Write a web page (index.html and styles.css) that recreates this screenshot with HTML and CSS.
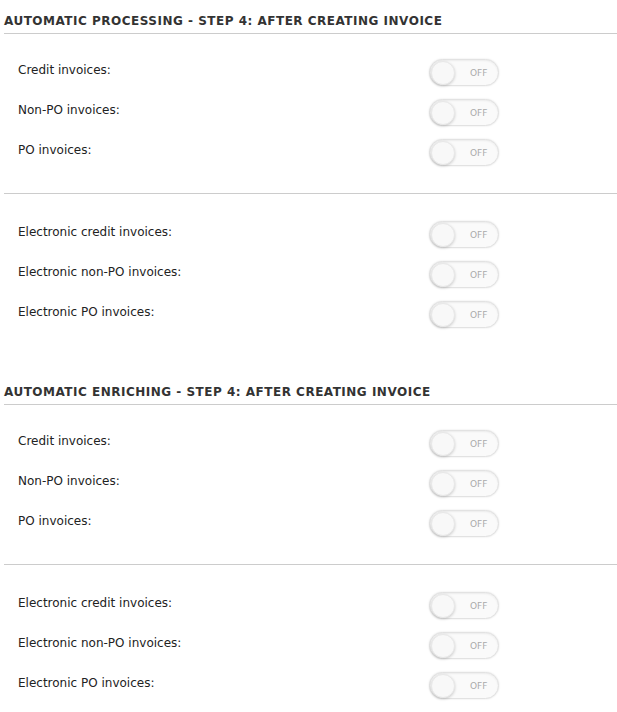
FILE: index.html
```html
<!DOCTYPE html>
<html>
<head>
    <title>Invoice settings</title>
    <link rel="stylesheet" href="styles.css">
</head>
<body>
    <div class="section">
        <h2 class="titre">Automatic processing - Step 4: After creating invoice</h2>
        <div class="groupe">
            <div class="ligne"><span>Credit invoices:</span><div class="toggle"><span class="knob"></span><span class="etat">OFF</span></div></div>
            <div class="ligne"><span>Non-PO invoices:</span><div class="toggle"><span class="knob"></span><span class="etat">OFF</span></div></div>
            <div class="ligne"><span>PO invoices:</span><div class="toggle"><span class="knob"></span><span class="etat">OFF</span></div></div>
        </div>
        <div class="groupe">
            <div class="ligne"><span>Electronic credit invoices:</span><div class="toggle"><span class="knob"></span><span class="etat">OFF</span></div></div>
            <div class="ligne"><span>Electronic non-PO invoices:</span><div class="toggle"><span class="knob"></span><span class="etat">OFF</span></div></div>
            <div class="ligne"><span>Electronic PO invoices:</span><div class="toggle"><span class="knob"></span><span class="etat">OFF</span></div></div>
        </div>
    </div>
    <div class="section">
        <h2 class="titre">Automatic enriching - Step 4: After creating invoice</h2>
        <div class="groupe">
            <div class="ligne"><span>Credit invoices:</span><div class="toggle"><span class="knob"></span><span class="etat">OFF</span></div></div>
            <div class="ligne"><span>Non-PO invoices:</span><div class="toggle"><span class="knob"></span><span class="etat">OFF</span></div></div>
            <div class="ligne"><span>PO invoices:</span><div class="toggle"><span class="knob"></span><span class="etat">OFF</span></div></div>
        </div>
        <div class="groupe">
            <div class="ligne"><span>Electronic credit invoices:</span><div class="toggle"><span class="knob"></span><span class="etat">OFF</span></div></div>
            <div class="ligne"><span>Electronic non-PO invoices:</span><div class="toggle"><span class="knob"></span><span class="etat">OFF</span></div></div>
            <div class="ligne"><span>Electronic PO invoices:</span><div class="toggle"><span class="knob"></span><span class="etat">OFF</span></div></div>
        </div>
    </div>
</body>
</html>
```

FILE: styles.css
```css
body {
    margin: 0;
    padding: 0 0 0 4px;
    background-color: #fff;
    font-family: "DejaVu Sans", Verdana, sans-serif;
    color: #222;
}
.section {
    margin-top: 10px;
    margin-bottom: 32px;
}
.titre {
    margin: 0;
    padding: 4px 0 5px 0;
    font-size: 12px;
    font-weight: bold;
    text-transform: uppercase;
    letter-spacing: 0.5px;
    color: #333;
    border-bottom: 1px solid #ccc;
}
.groupe {
    padding: 16px 0 23px 0;
}
.groupe + .groupe {
    border-top: 1px solid #ccc;
    padding-top: 18px;
    padding-bottom: 17px;
}
.ligne {
    display: flex;
    align-items: center;
    height: 40px;
    font-size: 12px;
    padding-left: 14px;
}
.ligne > span {
    width: 411px;
}
.toggle {
    position: relative;
    width: 68px;
    height: 25px;
    margin-top: 5px;
    border: 1px solid #e2e2e2;
    border-radius: 14px;
    background: #fafafa;
    box-shadow: 0 0 2px rgba(0,0,0,0.12), inset 0 1px 2px rgba(0,0,0,0.06);
    display: flex;
    align-items: center;
}
.knob {
    position: absolute;
    left: 1px;
    top: 1px;
    width: 22px;
    height: 22px;
    border-radius: 50%;
    background: #f8f8f8;
    border: 1px solid #e8e8e8;
    box-shadow: 0 1px 3px rgba(0,0,0,0.18);
}
.etat {
    margin-left: 40px;
    font-size: 9px;
    color: #aaa;
}
```
